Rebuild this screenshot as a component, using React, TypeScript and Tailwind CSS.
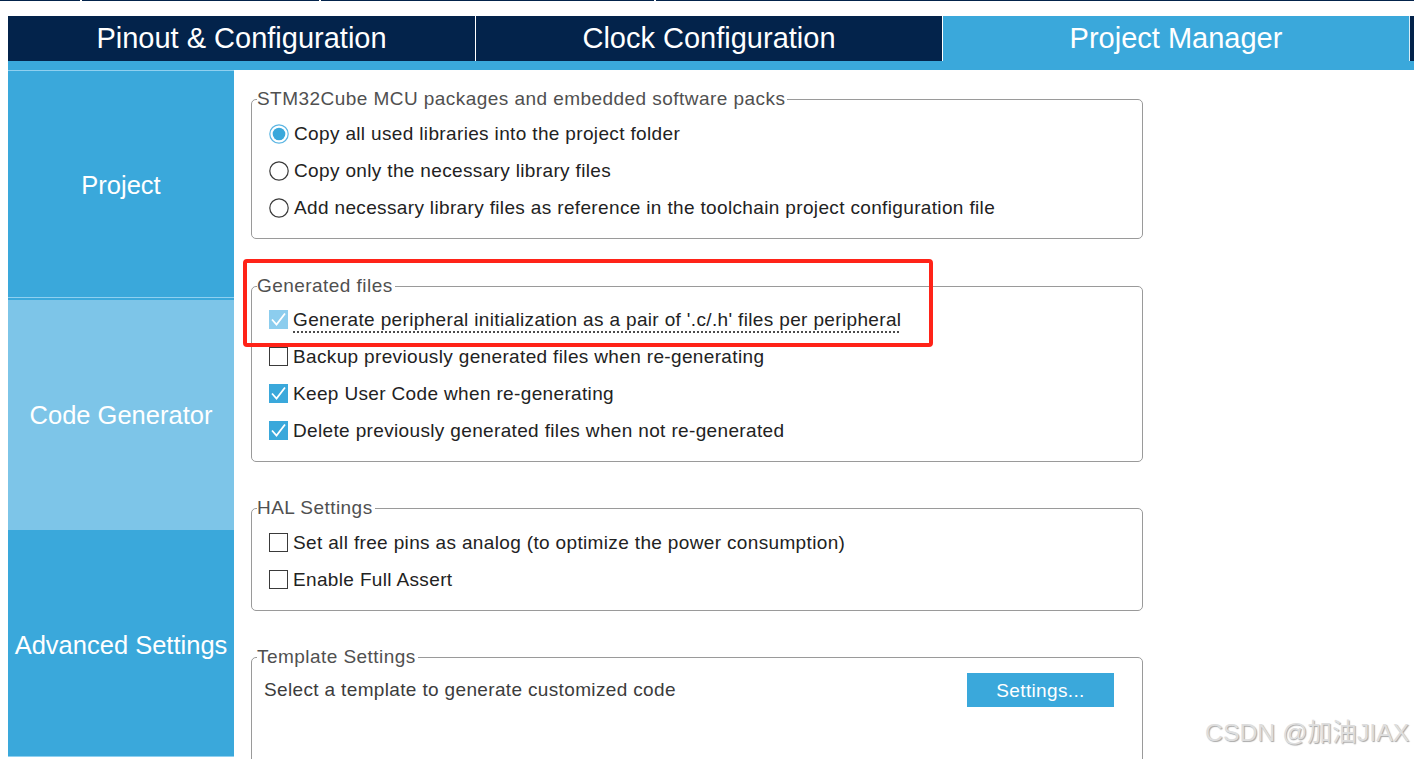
import React from "react";

type CS = "on" | "off" | "dis";

function CheckBox({ state }: { state: CS }) {
  if (state === "off") {
    return <span className="block w-[19px] h-[19px] shrink-0 border border-[#3a3a3a] bg-white" />;
  }
  return (
    <span
      className={
        state === "on"
          ? "flex w-[19px] h-[19px] shrink-0 items-center justify-center bg-[#3aa8db]"
          : "flex w-[19px] h-[19px] shrink-0 items-center justify-center bg-[#8ccdee]"
      }
    >
      <svg width="19" height="19" viewBox="0 0 19 19">
        <polyline points="3,9.5 7.5,14.5 16,3.5" fill="none" stroke="#ffffff" strokeWidth="1.8" />
      </svg>
    </span>
  );
}

function Radio({ on }: { on: boolean }) {
  return (
    <svg width="20" height="20" viewBox="0 0 20 20" className="shrink-0">
      <circle cx="10" cy="10" r="9.2" fill="#ffffff" stroke={on ? "#5db6e3" : "#3a3a3a"} strokeWidth="1.2" />
      {on && <circle cx="10" cy="10" r="6.3" fill="#3aa8db" />}
    </svg>
  );
}

function Row({ children, icon }: { children: React.ReactNode; icon: React.ReactNode }) {
  return (
    <div className="flex h-[37px] items-center pl-[17px] gap-[5px]">
      {icon}
      <span className="text-[19px] leading-[20px] tracking-[0.35px] text-[#222222] whitespace-nowrap">{children}</span>
    </div>
  );
}

function Box({ title, children, className }: { title: string; children: React.ReactNode; className?: string }) {
  return (
    <fieldset className={"w-[892px] border border-[#9a9a9a] rounded-[5px] " + (className ?? "")}>
      <legend className="ml-[5px] pr-[2px] text-[19px] leading-[20px] tracking-[0.45px] text-[#505050] whitespace-nowrap">
        {title}
      </legend>
      {children}
    </fieldset>
  );
}

export default function App() {
  return (
    <div className="relative w-[1414px] h-[759px] overflow-hidden bg-white font-['Liberation_Sans',Arial,sans-serif]">
      {/* top strip */}
      <div className="flex h-px">
        <div className="w-[80px] bg-[#03234b]" />
        <div className="w-[2px] bg-white" />
        <div className="w-[237px] bg-[#03234b]" />
        <div className="w-[2px] bg-white" />
        <div className="w-[333px] bg-[#03234b]" />
        <div className="w-[2px] bg-white" />
        <div className="flex-1 bg-[#03234b]" />
      </div>

      {/* tab bar */}
      <div className="mt-[15px] ml-[8px] flex h-[45px] bg-[#03234b] text-white text-[29px] leading-none">
        <div className="w-[467px] flex items-center justify-center">Pinout &amp; Configuration</div>
        <div className="w-px bg-white" />
        <div className="w-[466px] flex items-center justify-center">Clock Configuration</div>
        <div className="w-px bg-white" />
        <div className="w-[466px] flex items-center justify-center bg-[#3aa8db]">Project Manager</div>
        <div className="w-px bg-[#d7ecf7]" />
        <div className="flex-1" />
      </div>
      <div className="ml-[8px] h-[9px] bg-[#3aa8db]" />

      {/* main */}
      <div className="flex ml-[8px]">
        {/* sidebar */}
        <div className="w-[226px] shrink-0 flex flex-col text-white text-[25.5px] leading-none">
          <div className="h-[227px] pt-[4px] border-t border-[#8fd0f0] bg-[#3aa8db] flex items-center justify-center">Project</div>
          <div className="h-px bg-[#8fd0f0]" />
          <div className="h-[2px] bg-[#3aa8db]" />
          <div className="h-[230px] pt-[2px] bg-[#7dc5e8] flex items-center justify-center">Code Generator</div>
          <div className="h-[227px] pt-[6px] bg-[#3aa8db] border-b border-[#8fd0f0] flex items-center justify-center whitespace-nowrap">
            Advanced Settings
          </div>
        </div>

        {/* content */}
        <div className="flex-1 pl-[17px] pt-[19px]">
          <Box title="STM32Cube MCU packages and embedded software packs" className="pt-[6px] pb-[12px]">
            <Row icon={<Radio on />}>Copy all used libraries into the project folder</Row>
            <Row icon={<Radio on={false} />}>Copy only the necessary library files</Row>
            <Row icon={<Radio on={false} />}>Add necessary library files as reference in the toolchain project configuration file</Row>
          </Box>

          <Box title="Generated files" className="mt-[37px] pt-[5px] pb-[12px]">
            <Row icon={<CheckBox state="dis" />}>
              <span className="underline decoration-dotted decoration-[#444444] underline-offset-[6px]">
                Generate peripheral initialization as a pair of '.c/.h' files per peripheral
              </span>
            </Row>
            <Row icon={<CheckBox state="off" />}>Backup previously generated files when re-generating</Row>
            <Row icon={<CheckBox state="on" />}>Keep User Code when re-generating</Row>
            <Row icon={<CheckBox state="on" />}>Delete previously generated files when not re-generated</Row>
          </Box>

          <Box title="HAL Settings" className="mt-[36px] pt-[6px] pb-[12px]">
            <Row icon={<CheckBox state="off" />}>Set all free pins as analog (to optimize the power consumption)</Row>
            <Row icon={<CheckBox state="off" />}>Enable Full Assert</Row>
          </Box>

          <Box title="Template Settings" className="mt-[36px] pt-[6px] h-[140px]">
            <div className="flex h-[34px] items-center justify-between pl-[12px] pr-[28px]">
              <span className="text-[19px] leading-[20px] tracking-[0.35px] text-[#3c3c3c] whitespace-nowrap">
                Select a template to generate customized code
              </span>
              <button className="w-[147px] h-[34px] bg-[#3aa8db] text-white text-[19px] leading-none tracking-[0.35px]">
                Settings...
              </button>
            </div>
          </Box>
        </div>
      </div>

      {/* red annotation box */}
      <div className="absolute left-[243px] top-[259px] w-[690px] h-[88px] border-[4px] border-[#ff2318] rounded-[4px]" />

      {/* watermark */}
      <div className="absolute left-[1205px] top-[718px] text-[24.8px] leading-[30px] text-[#dedede] whitespace-nowrap font-['Liberation_Sans','Noto_Sans_CJK_SC',sans-serif] [text-shadow:1px_1px_1px_#a8a8a8]">
        CSDN @加油JIAX
      </div>
    </div>
  );
}
